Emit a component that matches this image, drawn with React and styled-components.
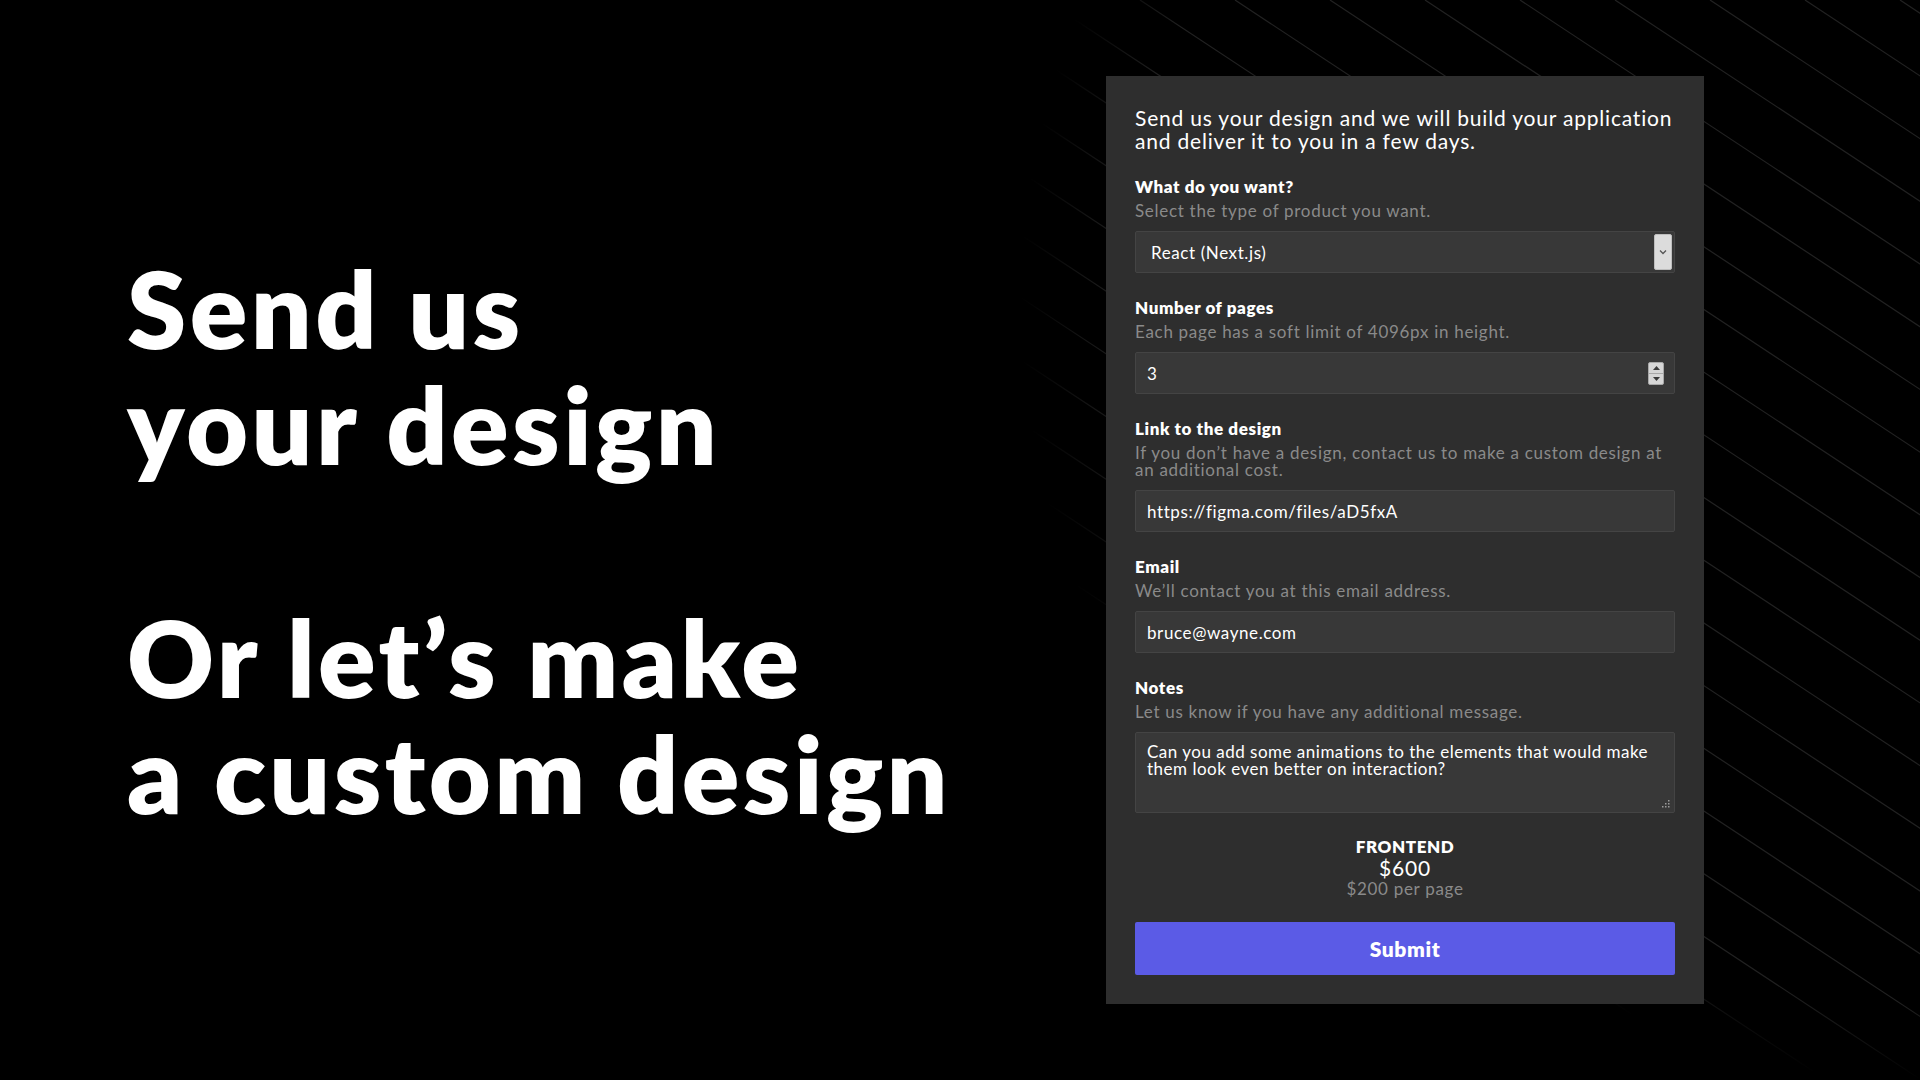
import React from 'react';
import styled, { createGlobalStyle } from 'styled-components';

const GlobalStyle = createGlobalStyle`
  *, *::before, *::after { box-sizing: border-box; }
  html, body { margin: 0; padding: 0; background: #000; }
  body {
    font-family: Lato, "Noto Sans", sans-serif;
    color: #fff;
    -webkit-font-smoothing: antialiased;
  }
`;

const Page = styled.main`
  position: relative;
  height: 1080px;
  overflow: hidden;
  display: flex;
  align-items: center;
  justify-content: space-between;
  padding: 0 216px 0 127px;
`;

const Backdrop = styled.svg`
  position: absolute;
  inset: 0;
  width: 100%;
  height: 100%;
  z-index: 0;
  pointer-events: none;
`;

const Hero = styled.div`
  position: relative;
  z-index: 1;
  display: flex;
  flex-direction: column;
  gap: 117px;
`;

const HeroTitle = styled.h1`
  margin: 0;
  font-size: 107px;
  line-height: 116px;
  font-weight: 800;
  letter-spacing: 3.4px;
  color: #fff;
`;

const Card = styled.form`
  position: relative;
  z-index: 1;
  width: 598px;
  background: #2e2e2e;
  padding: 30px 29px 29px 29px;
  display: flex;
  flex-direction: column;
`;

const Intro = styled.p`
  margin: 0 0 25px;
  font-size: 21px;
  line-height: 23px;
  letter-spacing: 0.8px;
  color: #fff;
`;

const Fields = styled.div`
  display: flex;
  flex-direction: column;
  gap: 25px;
`;

const Field = styled.div`
  display: flex;
  flex-direction: column;
`;

const Label = styled.label`
  font-size: 17px;
  line-height: 20px;
  font-weight: 800;
  letter-spacing: 0.6px;
  color: #fff;
`;

const Hint = styled.span`
  margin-top: 5px;
  font-size: 17px;
  line-height: 17px;
  letter-spacing: 0.7px;
  color: #8a8a8a;
`;

const ControlBox = styled.div`
  position: relative;
  margin-top: 12px;
  height: ${p => p.$h || 42}px;
  display: flex;
  align-items: ${p => (p.$top ? 'stretch' : 'center')};
  background: #383838;
  border: 1px solid #444;
  border-radius: 2px;
`;

const TextInput = styled.input`
  flex: 1;
  min-width: 0;
  height: 100%;
  padding: 0 0 0 11px;
  background: transparent;
  border: none;
  outline: none;
  color: #fff;
  font-family: inherit;
  font-size: 17px;
  letter-spacing: 0.6px;
  &::-webkit-inner-spin-button,
  &::-webkit-outer-spin-button {
    -webkit-appearance: none;
    margin: 0;
  }
  -moz-appearance: textfield;
`;

const Select = styled.select`
  flex: 1;
  min-width: 0;
  height: 100%;
  padding: 0 0 0 15px;
  background: transparent;
  border: none;
  outline: none;
  color: #fff;
  font-family: inherit;
  font-size: 17px;
  letter-spacing: 0.6px;
  appearance: none;
  -webkit-appearance: none;
  option { background: #383838; color: #fff; }
`;

const SelectArrow = styled.span`
  flex: none;
  width: 18px;
  height: 36px;
  margin-right: 2px;
  display: flex;
  align-items: center;
  justify-content: center;
  background: #dcdcdc;
  border: 1px solid #bdbdbd;
  border-radius: 2px;
`;

const Spinner = styled.span`
  flex: none;
  width: 16px;
  height: 23px;
  margin-right: 10px;
  display: flex;
  flex-direction: column;
  background: #d6d6d6;
  border: 1px solid #a8a8a8;
  border-radius: 2px;
  overflow: hidden;
`;

const SpinHalf = styled.span`
  flex: 1;
  display: flex;
  align-items: center;
  justify-content: center;
  & + & { border-top: 1px solid #a8a8a8; }
`;

const TextArea = styled.textarea`
  flex: 1;
  min-width: 0;
  padding: 10px 11px;
  background: transparent;
  border: none;
  outline: none;
  resize: none;
  color: #fff;
  font-family: inherit;
  font-size: 17px;
  line-height: 17px;
  letter-spacing: 0.5px;
  overflow: hidden;
`;

const Grip = styled.svg`
  position: absolute;
  right: 4px;
  bottom: 4px;
  width: 9px;
  height: 9px;
`;

const Price = styled.div`
  margin-top: 24px;
  display: flex;
  flex-direction: column;
  align-items: center;
  text-align: center;
`;

const PriceTitle = styled.span`
  font-size: 17px;
  line-height: 20px;
  font-weight: 800;
  letter-spacing: 0.6px;
`;

const PriceAmount = styled.span`
  font-size: 21px;
  line-height: 22px;
  letter-spacing: 0.8px;
`;

const PriceNote = styled.span`
  font-size: 17px;
  line-height: 20px;
  letter-spacing: 0.7px;
  color: #8a8a8a;
`;

const Submit = styled.button`
  margin-top: 23px;
  height: 53px;
  border: none;
  border-radius: 2px;
  background: #5b5be6;
  color: #fff;
  font-family: inherit;
  font-size: 21px;
  font-weight: 800;
  letter-spacing: 0.6px;
  cursor: pointer;
`;

function Lines() {
  const lines = [];
  const slope = 0.66;
  for (let c = -1900; c <= 1920; c += 95) {
    lines.push(
      <line key={c} x1={c} y1={0} x2={c + 1080 / slope} y2={1080} />
    );
  }
  return (
    <Backdrop viewBox="0 0 1920 1080" preserveAspectRatio="none" aria-hidden="true">
      <defs>
        <radialGradient
          id="fadeA"
          gradientUnits="userSpaceOnUse"
          cx="0"
          cy="0"
          r="1"
          gradientTransform="translate(1700 300) scale(680 720)"
        >
          <stop offset="0" stopColor="#fff" stopOpacity="1" />
          <stop offset="0.85" stopColor="#fff" stopOpacity="1" />
          <stop offset="1" stopColor="#fff" stopOpacity="0" />
        </radialGradient>
        <radialGradient
          id="fadeB"
          gradientUnits="userSpaceOnUse"
          cx="0"
          cy="0"
          r="1"
          gradientTransform="translate(1900 820) scale(360 260)"
        >
          <stop offset="0" stopColor="#fff" stopOpacity="1" />
          <stop offset="0.7" stopColor="#fff" stopOpacity="1" />
          <stop offset="1" stopColor="#fff" stopOpacity="0" />
        </radialGradient>
        <mask id="m" maskUnits="userSpaceOnUse" x="0" y="0" width="1920" height="1080">
          <rect x="0" y="0" width="1920" height="1080" fill="url(#fadeA)" />
          <rect x="0" y="0" width="1920" height="1080" fill="url(#fadeB)" />
        </mask>
      </defs>
      <g mask="url(#m)" stroke="#222" strokeWidth="1.2">
        {lines}
      </g>
    </Backdrop>
  );
}

export default function App() {
  return (
    <>
      <GlobalStyle />
      <Page>
        <Lines />
        <Hero>
          <HeroTitle>
            Send us
            <br />
            your design
          </HeroTitle>
          <HeroTitle>
            Or let’s make
            <br />
            a custom design
          </HeroTitle>
        </Hero>

        <Card onSubmit={e => e.preventDefault()}>
          <Intro>
            Send us your design and we will build your application and deliver it to you in a few days.
          </Intro>
          <Fields>
            <Field>
              <Label htmlFor="product">What do you want?</Label>
              <Hint>Select the type of product you want.</Hint>
              <ControlBox>
                <Select id="product" defaultValue="react">
                  <option value="react">React (Next.js)</option>
                  <option value="vue">Vue (Nuxt.js)</option>
                  <option value="html">HTML / CSS</option>
                </Select>
                <SelectArrow>
                  <svg width="8" height="6" viewBox="0 0 8 6">
                    <path d="M1 1.5 L4 4.5 L7 1.5" fill="none" stroke="#555" strokeWidth="1.3" />
                  </svg>
                </SelectArrow>
              </ControlBox>
            </Field>

            <Field>
              <Label htmlFor="pages">Number of pages</Label>
              <Hint>Each page has a soft limit of 4096px in height.</Hint>
              <ControlBox>
                <TextInput id="pages" type="number" defaultValue={3} />
                <Spinner>
                  <SpinHalf>
                    <svg width="7" height="4" viewBox="0 0 7 4">
                      <path d="M0 4 L3.5 0 L7 4 Z" fill="#3a3a3a" />
                    </svg>
                  </SpinHalf>
                  <SpinHalf>
                    <svg width="7" height="4" viewBox="0 0 7 4">
                      <path d="M0 0 L3.5 4 L7 0 Z" fill="#3a3a3a" />
                    </svg>
                  </SpinHalf>
                </Spinner>
              </ControlBox>
            </Field>

            <Field>
              <Label htmlFor="link">Link to the design</Label>
              <Hint>
                If you don’t have a design, contact us to make a custom design at an additional cost.
              </Hint>
              <ControlBox>
                <TextInput id="link" type="text" defaultValue="https://figma.com/files/aD5fxA" />
              </ControlBox>
            </Field>

            <Field>
              <Label htmlFor="email">Email</Label>
              <Hint>We’ll contact you at this email address.</Hint>
              <ControlBox>
                <TextInput id="email" type="email" defaultValue="bruce@wayne.com" />
              </ControlBox>
            </Field>

            <Field>
              <Label htmlFor="notes">Notes</Label>
              <Hint>Let us know if you have any additional message.</Hint>
              <ControlBox $h={81} $top>
                <TextArea
                  id="notes"
                  defaultValue="Can you add some animations to the elements that would make them look even better on interaction?"
                />
                <Grip viewBox="0 0 9 9">
                  <g fill="#9a9a9a">
                    <rect x="7" y="1" width="1.5" height="1.5" />
                    <rect x="4" y="4" width="1.5" height="1.5" />
                    <rect x="7" y="4" width="1.5" height="1.5" />
                    <rect x="1" y="7" width="1.5" height="1.5" />
                    <rect x="4" y="7" width="1.5" height="1.5" />
                    <rect x="7" y="7" width="1.5" height="1.5" />
                  </g>
                </Grip>
              </ControlBox>
            </Field>
          </Fields>

          <Price>
            <PriceTitle>FRONTEND</PriceTitle>
            <PriceAmount>$600</PriceAmount>
            <PriceNote>$200 per page</PriceNote>
          </Price>

          <Submit type="button">Submit</Submit>
        </Card>
      </Page>
    </>
  );
}
